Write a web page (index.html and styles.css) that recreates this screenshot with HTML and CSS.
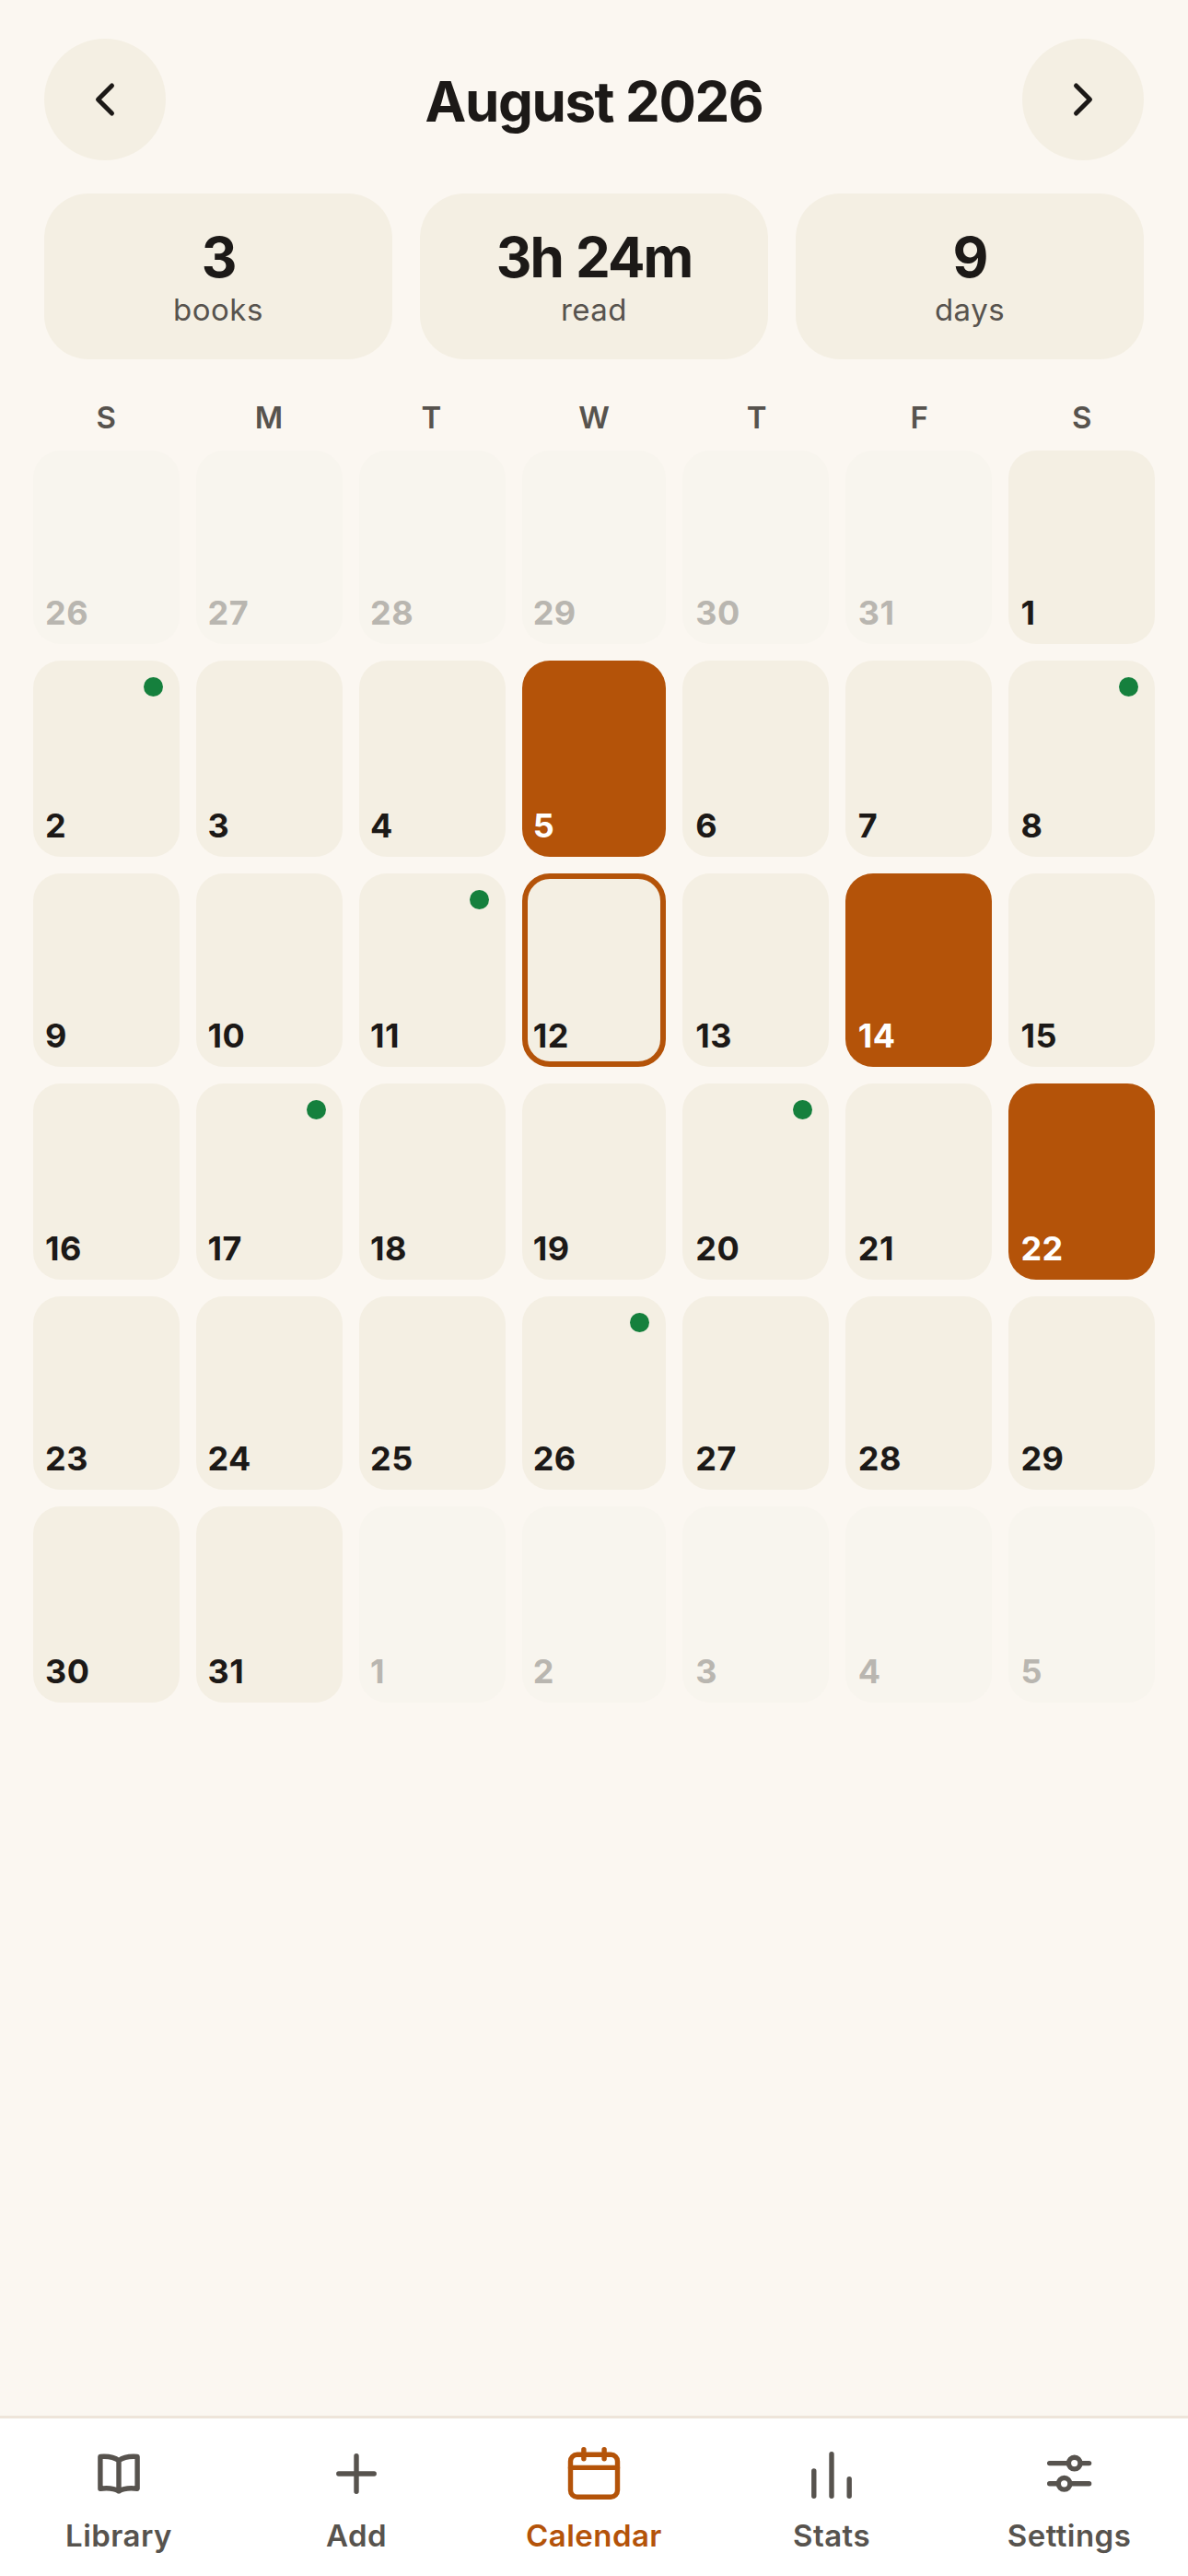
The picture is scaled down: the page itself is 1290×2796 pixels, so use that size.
FILE: index.html
```html
<!DOCTYPE html>
<html lang="en">
<head>
<meta charset="utf-8">
<title>Calendar</title>
<link rel="stylesheet" href="styles.css">
</head>
<body>
<main class="screen">
  <header class="month-bar">
    <button class="round-btn" aria-label="Previous month">
      <svg class="chev" viewBox="0 0 24 24"><path d="M15 18l-6-6 6-6"/></svg>
    </button>
    <h1 class="month-title">August 2026</h1>
    <button class="round-btn" aria-label="Next month">
      <svg class="chev" viewBox="0 0 24 24"><path d="M9 18l6-6-6-6"/></svg>
    </button>
  </header>
  <section class="stats">
    <div class="stat"><div class="stat-value">3</div><div class="stat-label">books</div></div>
    <div class="stat"><div class="stat-value">3h 24m</div><div class="stat-label">read</div></div>
    <div class="stat"><div class="stat-value">9</div><div class="stat-label">days</div></div>
  </section>
  <div class="weekdays">
    <span>S</span><span>M</span><span>T</span><span>W</span><span>T</span><span>F</span><span>S</span>
  </div>
  <section class="calendar">
    <div class="cell out"><span>26</span></div>
    <div class="cell out"><span>27</span></div>
    <div class="cell out"><span>28</span></div>
    <div class="cell out"><span>29</span></div>
    <div class="cell out"><span>30</span></div>
    <div class="cell out"><span>31</span></div>
    <div class="cell"><span>1</span></div>

    <div class="cell dot"><span>2</span></div>
    <div class="cell"><span>3</span></div>
    <div class="cell"><span>4</span></div>
    <div class="cell goal"><span>5</span></div>
    <div class="cell"><span>6</span></div>
    <div class="cell"><span>7</span></div>
    <div class="cell dot"><span>8</span></div>

    <div class="cell"><span>9</span></div>
    <div class="cell"><span>10</span></div>
    <div class="cell dot"><span>11</span></div>
    <div class="cell today"><span>12</span></div>
    <div class="cell"><span>13</span></div>
    <div class="cell goal"><span>14</span></div>
    <div class="cell"><span>15</span></div>

    <div class="cell"><span>16</span></div>
    <div class="cell dot"><span>17</span></div>
    <div class="cell"><span>18</span></div>
    <div class="cell"><span>19</span></div>
    <div class="cell dot"><span>20</span></div>
    <div class="cell"><span>21</span></div>
    <div class="cell goal"><span>22</span></div>

    <div class="cell"><span>23</span></div>
    <div class="cell"><span>24</span></div>
    <div class="cell"><span>25</span></div>
    <div class="cell dot"><span>26</span></div>
    <div class="cell"><span>27</span></div>
    <div class="cell"><span>28</span></div>
    <div class="cell"><span>29</span></div>

    <div class="cell"><span>30</span></div>
    <div class="cell"><span>31</span></div>
    <div class="cell out"><span>1</span></div>
    <div class="cell out"><span>2</span></div>
    <div class="cell out"><span>3</span></div>
    <div class="cell out"><span>4</span></div>
    <div class="cell out"><span>5</span></div>
  </section>
</main>
<nav class="tabbar">
  <a class="tab">
    <svg class="tab-icon" viewBox="0 0 24 24"><path d="M12 7.2C10.4 6 8 5.6 5.3 5.8V17.4C8 17.1 10.4 17.3 12 18.3C13.6 17.3 16 17.1 18.7 17.4V5.8C16 5.6 13.6 6 12 7.2ZM12 7.2V18.3"/></svg>
    <span>Library</span>
  </a>
  <a class="tab">
    <svg class="tab-icon" viewBox="0 0 24 24"><path d="M12 5.6V18.4M5.6 12H18.4"/></svg>
    <span>Add</span>
  </a>
  <a class="tab active">
    <svg class="tab-icon" viewBox="0 0 24 24"><rect x="3.5" y="5.1" width="17" height="15.3" rx="2.4"/><path d="M3.5 9.8H20.5M8.3 3.2V6.6M15.7 3.2V6.6"/></svg>
    <span>Calendar</span>
  </a>
  <a class="tab">
    <svg class="tab-icon" viewBox="0 0 24 24"><path d="M5.6 11V20.1M12 4.9V20.1M18.4 13.9V20.1"/></svg>
    <span>Stats</span>
  </a>
  <a class="tab">
    <svg class="tab-icon" viewBox="0 0 24 24"><path d="M4.9 8.2H19.2M4.9 15.6H19.2"/><circle class="knob" cx="13.9" cy="8.2" r="2.1"/><circle class="knob" cx="10.2" cy="15.6" r="2.1"/></svg>
    <span>Settings</span>
  </a>
</nav>
</body>
</html>
```
FILE: styles.css
```css
* { box-sizing: border-box; }

html, body { margin: 0; padding: 0; }

body {
  width: 1290px;
  height: 2796px;
  display: flex;
  flex-direction: column;
  background: #fbf7f1;
  color: #1c1917;
  font-family: Inter, "Liberation Sans", sans-serif;
}

.screen { flex: 1; }

.month-bar {
  display: flex;
  align-items: center;
  justify-content: space-between;
  padding: 42px 48px 0;
}

.round-btn {
  width: 132px;
  height: 132px;
  display: flex;
  align-items: center;
  justify-content: center;
  padding: 0;
  border: 0;
  border-radius: 50%;
  background: #f4efe3;
}

.chev {
  width: 60px;
  height: 60px;
  fill: none;
  stroke: #1c1917;
  stroke-width: 2;
  stroke-linecap: round;
  stroke-linejoin: round;
}

.month-title {
  margin: 0;
  font-size: 60px;
  font-weight: 750;
  line-height: 72px;
  letter-spacing: -1.4px;
  position: relative;
  top: 2px;
}

.stats {
  display: grid;
  grid-template-columns: repeat(3, 378px);
  gap: 30px;
  padding: 36px 48px 0;
}

.stat {
  height: 180px;
  display: flex;
  flex-direction: column;
  align-items: center;
  justify-content: center;
  border-radius: 48px;
  background: #f4efe3;
}

.stat-value {
  font-size: 60px;
  font-weight: 750;
  line-height: 72px;
  letter-spacing: -2px;
  word-spacing: 2px;
}

.stat-label {
  font-size: 33px;
  line-height: 42px;
  letter-spacing: 0.5px;
  color: #57534e;
}

.weekdays,
.calendar {
  display: grid;
  column-gap: 18px;
  padding: 0 36px;
}

.weekdays {
  grid-template-columns: repeat(7, 1fr);
  padding-top: 36px;
  margin-bottom: 8px;
  font-size: 33px;
  font-weight: 600;
  line-height: 55px;
  color: #57534e;
  text-align: center;
}

.calendar {
  grid-template-columns: 159px 159px 159px 156px 159px 159px 159px;
  grid-template-rows: 210px 213px 210px 213px 210px 213px;
  row-gap: 18px;
}

.cell {
  position: relative;
  display: flex;
  align-items: flex-end;
  padding: 12px 12px 12px 13px;
  border-radius: 30px;
  background: #f4efe3;
  font-size: 36px;
  font-weight: 660;
  letter-spacing: 0.5px;
}

.cell:nth-child(7n+2) { padding-left: 12.5px; }
.cell:nth-child(7n+3) { padding-left: 12px; }
.cell:nth-child(7n+4) { padding-left: 11.7px; }
.cell:nth-child(7n+5) { padding-left: 14.3px; }
.cell:nth-child(7n+6) { padding-left: 13.8px; }
.cell:nth-child(7n+7) { padding-left: 13.4px; }

.cell.out {
  background: #f8f5ee;
  color: #b9b6b0;
}

.cell.goal {
  background: #b45309;
  color: #fff;
}

.cell.today {
  padding: 6px 6px 6px 5.7px;
  border: 6px solid #b45309;
}

.cell.dot::after {
  content: "";
  position: absolute;
  top: 18px;
  right: 18px;
  width: 21px;
  height: 21px;
  border-radius: 50%;
  background: #15803d;
}

.tabbar {
  display: grid;
  grid-template-columns: repeat(5, 258px);
  height: 174px;
  border-top: 3px solid #eee5da;
  background: #fff;
}

.tab {
  display: flex;
  flex-direction: column;
  align-items: center;
  padding-top: 24px;
  font-size: 33px;
  font-weight: 600;
  line-height: 42px;
  letter-spacing: 0.45px;
  color: #57534e;
}

.tab.active { color: #b45309; }

.tab-icon {
  width: 72px;
  height: 72px;
  margin-bottom: 10px;
  fill: none;
  stroke: currentColor;
  stroke-width: 1.8;
  stroke-linecap: round;
  stroke-linejoin: round;
}

.knob { fill: #fff; }
```
